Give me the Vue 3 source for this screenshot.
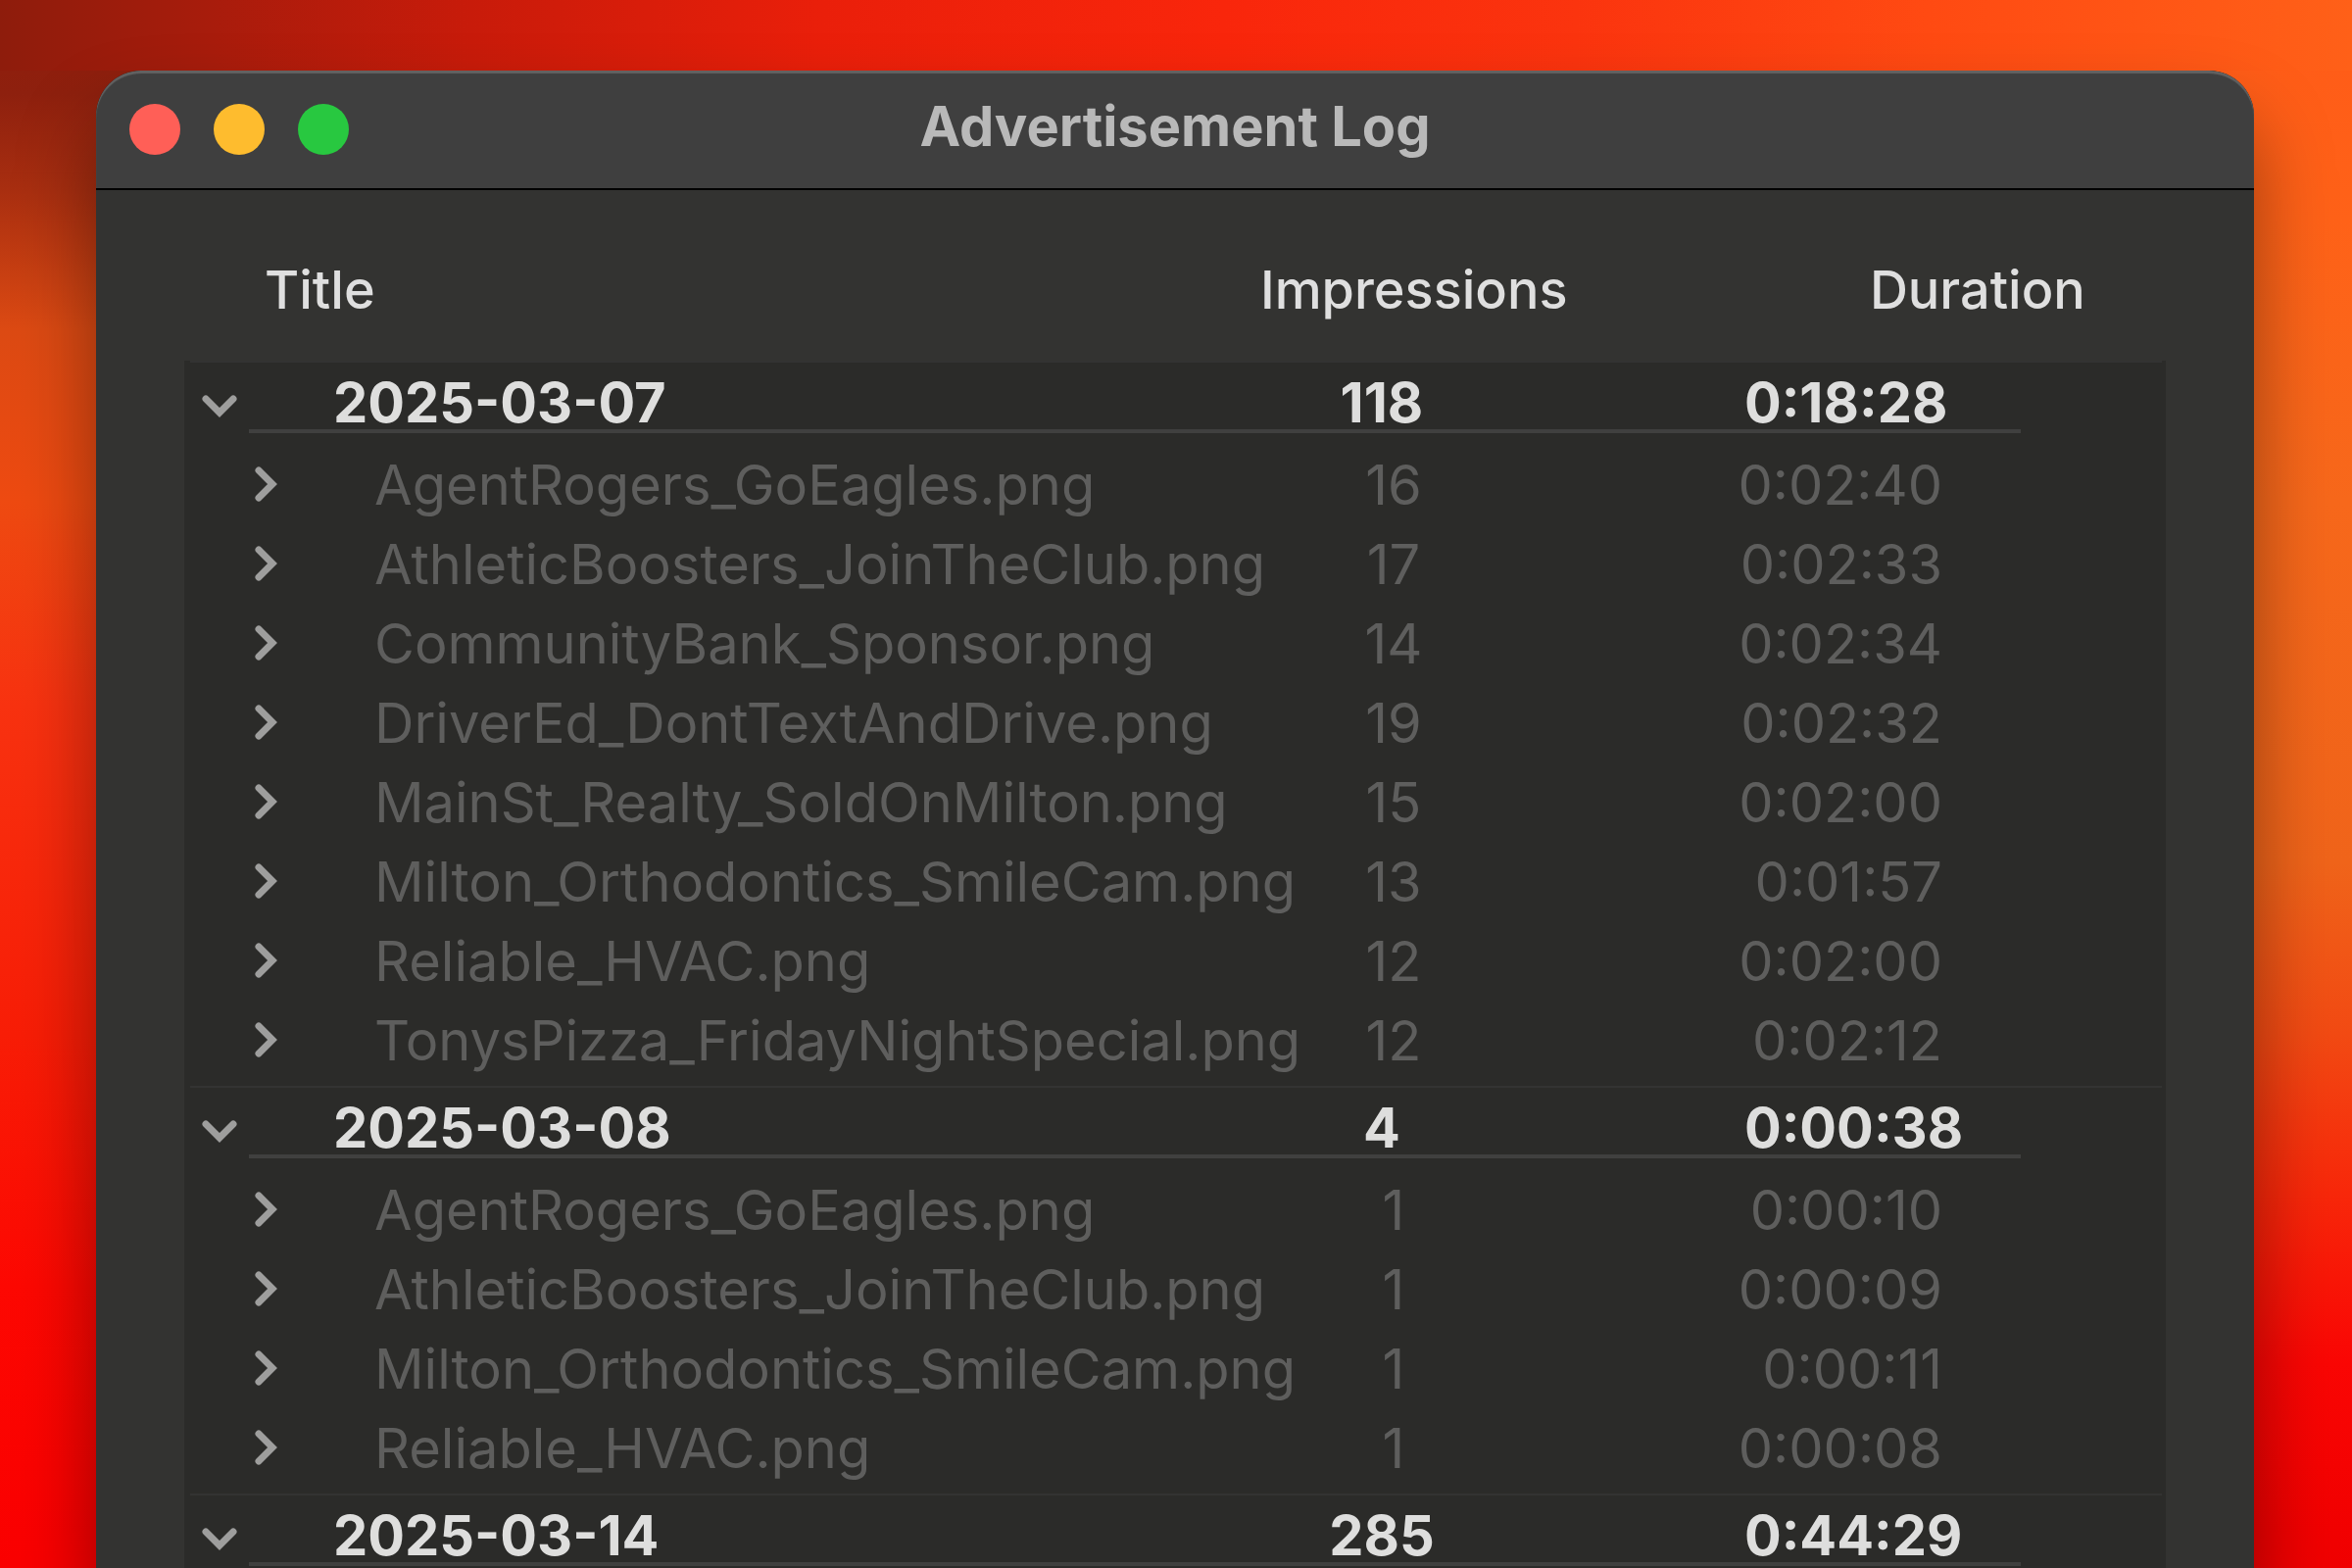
<script setup>
import { reactive } from 'vue'

const lights = [
  { key: 'close', label: 'Close' },
  { key: 'minimize', label: 'Minimize' },
  { key: 'zoom', label: 'Zoom' },
]

const groups = reactive([
  {
    date: '2025-03-07',
    impressions: 118,
    duration: '0:18:28',
    open: true,
    ads: [
      { title: 'AgentRogers_GoEagles.png', impressions: 16, duration: '0:02:40' },
      { title: 'AthleticBoosters_JoinTheClub.png', impressions: 17, duration: '0:02:33' },
      { title: 'CommunityBank_Sponsor.png', impressions: 14, duration: '0:02:34' },
      { title: 'DriverEd_DontTextAndDrive.png', impressions: 19, duration: '0:02:32' },
      { title: 'MainSt_Realty_SoldOnMilton.png', impressions: 15, duration: '0:02:00' },
      { title: 'Milton_Orthodontics_SmileCam.png', impressions: 13, duration: '0:01:57' },
      { title: 'Reliable_HVAC.png', impressions: 12, duration: '0:02:00' },
      { title: 'TonysPizza_FridayNightSpecial.png', impressions: 12, duration: '0:02:12' },
    ],
  },
  {
    date: '2025-03-08',
    impressions: 4,
    duration: '0:00:38',
    open: true,
    ads: [
      { title: 'AgentRogers_GoEagles.png', impressions: 1, duration: '0:00:10' },
      { title: 'AthleticBoosters_JoinTheClub.png', impressions: 1, duration: '0:00:09' },
      { title: 'Milton_Orthodontics_SmileCam.png', impressions: 1, duration: '0:00:11' },
      { title: 'Reliable_HVAC.png', impressions: 1, duration: '0:00:08' },
    ],
  },
  {
    date: '2025-03-14',
    impressions: 285,
    duration: '0:44:29',
    open: true,
    ads: [],
  },
])
</script>

<template>
  <div class="desktop">
    <main class="window">
      <!-- Title bar -->
      <header class="titlebar">
        <div class="lights">
          <button
            v-for="l in lights"
            :key="l.key"
            :class="['light', `light--${l.key}`]"
            :aria-label="l.label"
          ></button>
        </div>
        <h1 class="window-title">Advertisement Log</h1>
      </header>

      <!-- Log outline -->
      <div class="content">
        <table class="log">
          <colgroup>
            <col class="col-title" />
            <col class="col-impressions" />
            <col class="col-duration" />
          </colgroup>
          <thead>
            <tr>
              <th class="head-title" scope="col">Title</th>
              <th scope="col">Impressions</th>
              <th class="head-duration" scope="col">Duration</th>
            </tr>
          </thead>
          <tbody v-for="g in groups" :key="g.date">
            <tr class="day">
              <th scope="rowgroup">
                <div class="day-title">
                  <button class="disclosure" :aria-expanded="g.open" :aria-label="g.date" @click="g.open = !g.open">
                    <svg :class="['chevron', !g.open && 'chevron--closed']" width="36" height="36" viewBox="0 0 36 36">
                      <path d="M4 14 L18 28 L32 14" />
                    </svg>
                  </button>
                  <span>{{ g.date }}</span>
                </div>
              </th>
              <td class="day-impressions">{{ g.impressions }}</td>
              <td class="day-duration">{{ g.duration }}</td>
            </tr>
            <template v-if="g.open">
              <tr v-for="ad in g.ads" :key="ad.title" class="ad">
                <td>
                  <div class="ad-title">
                    <button class="disclosure" aria-expanded="false" :aria-label="ad.title">
                      <svg class="chevron" width="24" height="38" viewBox="0 0 24 38">
                        <path d="M4 4 L18 18 L4 32" />
                      </svg>
                    </button>
                    <span>{{ ad.title }}</span>
                  </div>
                </td>
                <td class="ad-impressions">{{ ad.impressions }}</td>
                <td class="ad-duration">{{ ad.duration }}</td>
              </tr>
            </template>
          </tbody>
        </table>
      </div>
    </main>
  </div>
</template>

<style>
body {
  margin: 0;
  background: #f80000;
}
</style>

<style scoped>
.desktop {
  box-sizing: border-box;
  display: flex;
  height: 100vh;
  padding: 72px 100px 0 98px;
  overflow: hidden;
  font-family: Inter, "Liberation Sans", sans-serif;
  font-size: 56px;
  line-height: 64px;
  background:
    linear-gradient(to right, #8e1c0c 0%, #a81c0c 9%, #c81b0a 20%, #ea1f0a 35%, #f9260b 52%, #fb340e 67%, #ff4a12 82%, #ff6018 100%) top / 100% 72px no-repeat,
    linear-gradient(to bottom, #901c0c 0%, #8e200e 6%, #a82e10 12%, #dc4a13 21%, #ee4a11 32%, #f83210 45%, #f81d06 66%, #fd0802 82%, #fa0000 100%) left / 50% 100% no-repeat,
    linear-gradient(to bottom, #ff5a17 0%, #ff6218 14%, #f7681b 32%, #f0641a 55%, #f24a13 66%, #f8280a 76%, #fa0604 87%, #f00000 100%) right / 50% 100% no-repeat;
}

.window {
  flex: 1;
  display: flex;
  flex-direction: column;
  min-width: 0;
  overflow: hidden;
  background: #333331;
  border-radius: 46px 46px 0 0;
  box-shadow: 0 50px 80px rgba(0, 0, 0, 0.4);
}

/* Title bar */
.titlebar {
  display: grid;
  grid-template-columns: 1fr auto 1fr;
  align-items: center;
  height: 120px;
  flex-shrink: 0;
  padding: 0 34px;
  box-sizing: border-box;
  background: #3f3f3f;
  border-radius: 46px 46px 0 0;
  box-shadow: inset 0 3px 1px #626262;
}

.lights {
  display: flex;
  gap: 34px;
}

.light {
  width: 52px;
  height: 52px;
  padding: 0;
  border: none;
  border-radius: 50%;
}

.light--close {
  background: #ff5f57;
}

.light--minimize {
  background: #febc2e;
}

.light--zoom {
  background: #28c840;
}

.window-title {
  margin: 0;
  padding-bottom: 6px;
  font-size: 56px;
  font-weight: 700;
  color: #b9b9b9;
}

/* Table */
.content {
  flex: 1;
  padding: 0 90px;
  border-top: 2px solid #000;
}

.log {
  width: 100%;
  table-layout: fixed;
  border-collapse: collapse;
  white-space: nowrap;
}

.col-title {
  width: 54.3%;
}

.col-impressions {
  width: 13.45%;
}

.log th,
.log td {
  padding: 0;
  text-align: left;
}

.log thead th {
  height: 144px;
  padding-top: 30px;
  font-size: 54px;
  font-weight: 500;
  color: #dfdfdf;
}

.log thead .head-title {
  padding-left: 82px;
}

.log thead .head-duration {
  padding-left: 350px;
}

tbody {
  background: #2b2b29;
}

.day {
  height: 86px;
  font-weight: 700;
  color: #dededd;
  background:
    linear-gradient(#333332, #333332) 6px 0 / calc(100% - 10px) 2px no-repeat,
    linear-gradient(#40403f, #40403f) 66px 70px / calc(100% - 214px) 4px no-repeat;
}

.day-title {
  display: flex;
  align-items: center;
  gap: 98px;
  padding-left: 18px;
}

.log .day-impressions {
  padding-right: 24px;
  text-align: center;
}

.log .day-duration {
  padding-left: 222px;
}

.ad {
  height: 81px;
  color: #5e5e5d;
}

/* Breathing room before the next day */
.log .ad:last-child td {
  padding-bottom: 6px;
}

.ad:last-child {
  height: 87px;
}

.ad-title {
  display: flex;
  align-items: center;
  gap: 98px;
  padding-left: 72px;
}

.log .ad-impressions {
  text-align: center;
}

.log .ad-duration {
  padding-right: 228px;
  text-align: right;
}

/* Disclosure triangles */
.disclosure {
  display: flex;
  padding: 0;
  border: none;
  background: none;
}

.chevron {
  fill: none;
  stroke: #9e9e9d;
  stroke-width: 7;
  stroke-linecap: round;
}

.chevron--closed {
  transform: rotate(-90deg);
}
</style>
